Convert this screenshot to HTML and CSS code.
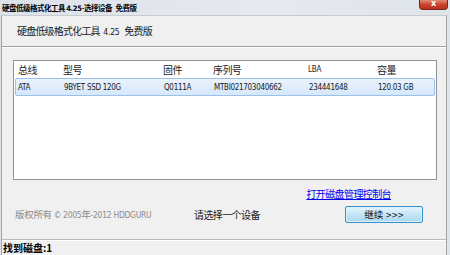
FILE: index.html
```html
<!DOCTYPE html>
<html>
<head>
    <title>硬盘低级格式化工具 4.25-选择设备</title>
    <link rel="stylesheet" href="styles.css">
</head>
<body>
    <div class="titlebar">
        <span class="title">硬盘低级格式化工具 <span class="latin">4.25</span>-选择设备&nbsp;&nbsp; 免费版</span>
        <span class="close">x</span>
    </div>

    <div class="window">
        <div class="header">硬盘低级格式化工具 <span class="ver">4.25</span>&nbsp; 免费版</div>

        <div class="body">
            <div class="listbox">
                <div class="row head">
                    <span class="c1">总线</span>
                    <span class="c2">型号</span>
                    <span class="c3">固件</span>
                    <span class="c4">序列号</span>
                    <span class="c5 latin">LBA</span>
                    <span class="c6">容量</span>
                </div>
                <div class="row selected latin">
                    <span class="c1">ATA</span>
                    <span class="c2">9BYET SSD 120G</span>
                    <span class="c3">Q0111A</span>
                    <span class="c4">MTBI021703040662</span>
                    <span class="c5">234441648</span>
                    <span class="c6">120.03 GB</span>
                </div>
            </div>

            <div class="linkline"><a href="#">打开磁盘管理控制台</a></div>

            <div class="footer">
                <span class="copy">版权所有 <span class="latin">© 2005</span>年<span class="latin">-2012 HDDGURU</span></span>
                <span class="hint">请选择一个设备</span>
                <button class="next">继续 <span class="latin">&gt;&gt;&gt;</span></button>
            </div>
        </div>

        <div class="status">找到磁盘:1</div>
    </div>
</body>
</html>
```

FILE: styles.css
```css
body { margin: 0; width: 450px; height: 255px; overflow: hidden; background: linear-gradient(to right, #dde2ea, #e6e9ef 60%, #dfe4eb); font-family: "Noto Sans CJK SC", "Liberation Sans", sans-serif; color: #1a1a1a; }
.latin { font-family: "DejaVu Sans Condensed", "Liberation Sans", sans-serif; letter-spacing: -0.3px; }

.titlebar { height: 15px; display: flex; justify-content: space-between; align-items: flex-start; }
.title { font-size: 7.5px; font-weight: bold; line-height: 15px; padding-left: 2px; color: #000; letter-spacing: -0.5px; }
.title .latin { font-size: 7.5px; letter-spacing: -0.3px; }
.close { width: 27px; height: 9px; margin-right: 2px; background: linear-gradient(#e08a75, #c7402a 55%, #b83220); border: 1px solid #7a2418; border-top: 0; border-radius: 0 0 4px 4px; color: #fff; font: bold 8px "DejaVu Sans", sans-serif; text-align: center; line-height: 8px; }

.window { margin: 0 3px 0 1px; height: 240px; background: #f0f0f0; border-left: 1px solid #a4a4a4; border-right: 1px solid #a4a4a4; border-top: 1px solid #c8ccd2; box-sizing: border-box; display: flex; flex-direction: column; }

.header { height: 30px; padding-left: 15px; font-size: 10px; line-height: 30px; border-bottom: 1px solid #a0a0a0; box-shadow: 0 1px 0 #fff; letter-spacing: -0.8px; }
.header .ver { font-family: "DejaVu Sans Condensed", sans-serif; font-size: 8.5px; letter-spacing: -0.2px; padding: 0 2px; }

.body { flex: 1; padding: 13px 9px 0 11px; display: flex; flex-direction: column; }

.listbox { height: 120px; background: #fff; border: 1px solid #8e9299; box-sizing: border-box; padding: 0 1px; }
.row { display: flex; height: 16px; align-items: center; font-size: 10px; }
.row span { padding-left: 3px; box-sizing: border-box; white-space: nowrap; }
.row.head { height: 17px; color: #222; letter-spacing: -0.6px; }
.row.selected { height: 16px; font-size: 8px; background: linear-gradient(#eaf3fd, #d5e7fb); border: 1px solid #9cc0e8; border-radius: 2px; }
.row.selected span:first-child { padding-left: 2px; }
.c1 { width: 45px; }
.c2 { width: 100px; }
.c3 { width: 50px; }
.c4 { width: 95px; }
.c5 { width: 69px; }
.c6 { flex: 1; }
.row.head .c5 { font-size: 8px; letter-spacing: -0.2px; }

.linkline { text-align: right; padding-right: 46px; margin-top: 8px; font-size: 10px; line-height: 12px; letter-spacing: -0.6px; }
.linkline a { color: #0000ee; }

.footer { display: flex; align-items: center; margin-top: 5px; height: 18px; }
.copy { color: #8c8c8c; font-size: 9.5px; width: 179px; padding-left: 2px; letter-spacing: -0.3px; }
.copy .latin { font-size: 8.5px; }
.hint { font-size: 10px; width: 151px; letter-spacing: -0.6px; }
.next { width: 78px; height: 17px; padding: 0; font-size: 9.5px; font-family: "Noto Sans CJK SC", sans-serif; color: #111; background: linear-gradient(#e8f5fd, #c4e5f8 50%, #a9d9f5); border: 1px solid #3c8fc6; border-radius: 2px; box-shadow: inset 0 0 0 1px #d8f0fc; }
.next .latin { font-size: 8.5px; }

.status { margin-top: auto; height: 15px; border-top: 1px solid #b8b8b8; box-shadow: inset 0 1px 0 #fff; font-size: 10px; font-weight: bold; line-height: 15px; padding-left: 1px; color: #000; }
```
